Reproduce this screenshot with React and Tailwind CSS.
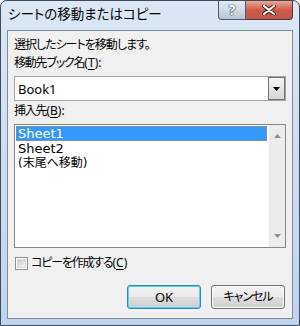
import React from 'react';

const ui = "font-['Noto_Sans','Noto_Sans_CJK_JP',sans-serif] [font-feature-settings:'palt']";

function TitleButtons() {
    return (
        <div className="flex self-start mr-[6px]">
            <div className="w-[28px] h-[19px] border border-t-0 border-[#4b5a6c] rounded-bl-[4px] bg-gradient-to-b from-[#e3ebf3] via-[#cfdae6] to-[#b5c4d4] flex items-center justify-center">
                <span className="text-white text-[14px] font-bold leading-none [text-shadow:0_0_1px_#2b3440,0_0_1px_#2b3440,0_0_1px_#2b3440]">?</span>
            </div>
            <div className="w-[47px] h-[19px] border border-t-0 border-l-0 border-[#4b3a3a] rounded-br-[4px] bg-gradient-to-b from-[#e6a896] via-[#cf5b48] to-[#c0584a] flex items-center justify-center">
                <svg width="14" height="10" viewBox="0 0 14 10">
                    <path d="M2 1 L12 9 M12 1 L2 9" stroke="#3a2020" strokeWidth="4" strokeLinecap="round" />
                    <path d="M2 1 L12 9 M12 1 L2 9" stroke="#ffffff" strokeWidth="2.2" strokeLinecap="round" />
                </svg>
            </div>
        </div>
    );
}

// mnemonic key, e.g. (T)
function Key({ k, tail = '' }) {
    return (
        <span className="tracking-normal">
            (<span className="underline underline-offset-2">{k}</span>){tail}
        </span>
    );
}

export default function App() {
    return (
        <div className={`w-[300px] h-[326px] bg-white ${ui}`}>
            <div className="w-[300px] h-[326px] border border-[#3d4a5a] rounded-t-[7px] bg-gradient-to-b from-[#dbe7f4] to-[#bfd4ec] flex flex-col">
                <div className="h-[29px] flex items-start justify-between">
                    <div className="pl-[7px] pt-[5px] text-[13.5px] leading-[16px] text-black">シートの移動またはコピー</div>
                    <TitleButtons />
                </div>
                <div className="mx-[6px] mb-[6px] flex-1 border border-[#7d8ea3] bg-[#f0f0f0] px-[6px] pt-[6px] text-[12px] leading-[16px] text-black flex flex-col">
                    <div className="tracking-[-1px]">選択したシートを移動します。</div>
                    <div className="mt-[2px] tracking-[-1.2px]">移動先ブック名<Key k="T" tail=":" /></div>
                    <div className="mt-[5px] h-[25px] border border-[#a3a3a3] bg-white flex items-center">
                        <span className="flex-1 pl-[3px] text-[13px]">Book1</span>
                        <div className="w-[17px] h-[23px] border border-[#6f6f6f] bg-gradient-to-b from-[#f4f4f4] to-[#d6d6d6] flex items-center justify-center">
                            <svg width="7" height="4" viewBox="0 0 7 4"><path d="M0 0 H7 L3.5 4 Z" fill="#000" /></svg>
                        </div>
                    </div>
                    <div className="mt-[2px] tracking-[-1.2px]">挿入先<Key k="B" tail=":" /></div>
                    <div className="mt-[5px] h-[124px] border border-[#828790] bg-white flex">
                        <div className="flex-1 p-[1px] text-[13px] leading-[15px] font-['DejaVu_Sans','Noto_Sans_CJK_JP',sans-serif]">
                            <div className="h-[15px] bg-[#3399ff] text-white pl-[2px] outline-1 outline-dotted outline-[#c08a50] -outline-offset-1">Sheet1</div>
                            <div className="h-[15px] pl-[2px]">Sheet2</div>
                            <div className="h-[15px] pl-[2px] text-[12px]">(末尾へ移動)</div>
                        </div>
                        <div className="w-[17px] bg-[#ececec] border-l border-[#f8f8f8] flex flex-col justify-between items-center py-[9px]">
                            <svg width="7" height="4" viewBox="0 0 7 4"><path d="M0 4 H7 L3.5 0 Z" fill="#8e8e8e" /></svg>
                            <svg width="7" height="4" viewBox="0 0 7 4"><path d="M0 0 H7 L3.5 4 Z" fill="#8e8e8e" /></svg>
                        </div>
                    </div>
                    <div className="mt-[8px] flex items-center gap-[3px] h-[14px]">
                        <div className="ml-[1px] w-[13px] h-[13px] border border-[#8e8f8f] bg-white p-[1px]">
                            <div className="w-full h-full bg-gradient-to-br from-[#cbcbcb] to-[#f6f6f6] border border-[#d8d8d8]" />
                        </div>
                        <span className="tracking-[-1.2px]">コピーを作成する<Key k="C" /></span>
                    </div>
                    <div className="mt-[15px] flex justify-end gap-[10px] pr-[1px]">
                        <button className="w-[74px] h-[24px] rounded-[3px] border border-[#3c7fb1] shadow-[inset_0_0_0_1px_#48d8fb] bg-[linear-gradient(#f2f2f2_0%,#ebebeb_50%,#dddddd_50%,#cfcfcf_100%)] text-[13px] leading-none">OK</button>
                        <button className="w-[74px] h-[24px] rounded-[3px] border border-[#707070] shadow-[inset_0_0_0_1px_#fcfcfc] bg-[linear-gradient(#f2f2f2_0%,#ebebeb_50%,#dddddd_50%,#cfcfcf_100%)] text-[12px] tracking-[-1px] leading-none">キャンセル</button>
                    </div>
                </div>
            </div>
        </div>
    );
}
